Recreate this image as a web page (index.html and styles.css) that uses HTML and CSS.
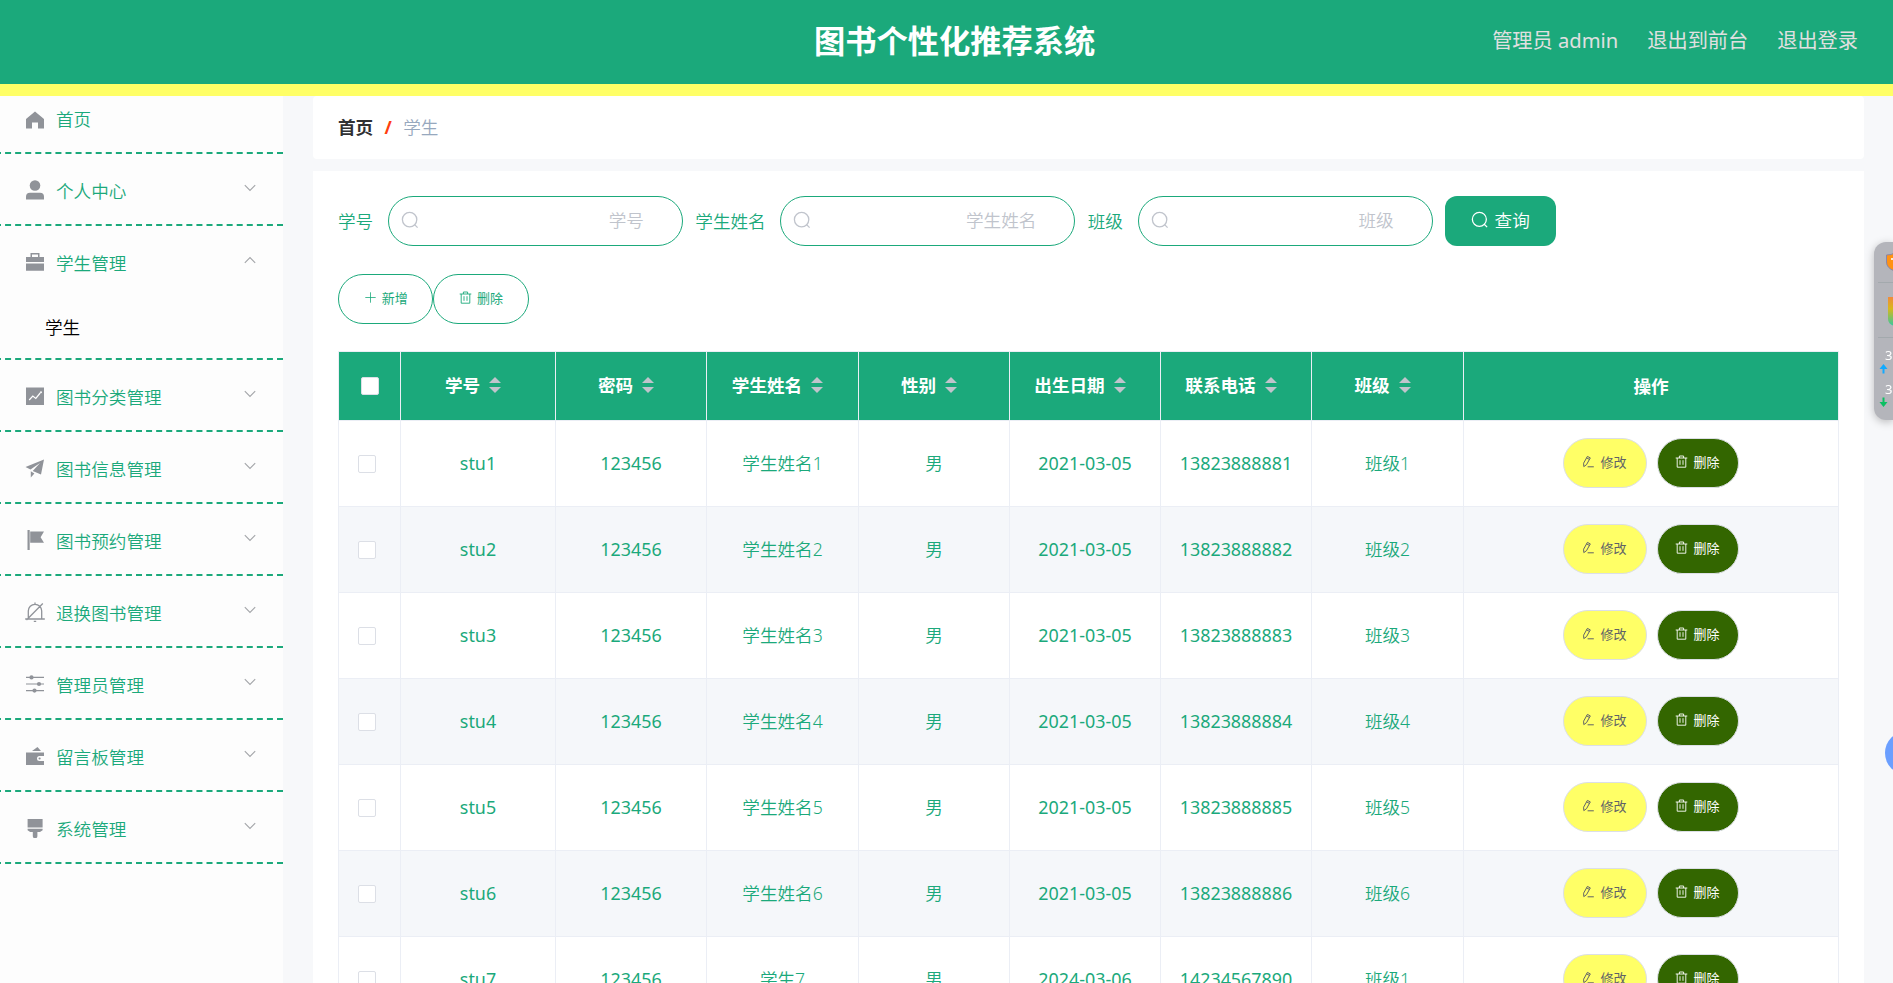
FILE: index.html
```html
<!DOCTYPE html>
<html lang="zh-CN">
<head>
  <meta charset="UTF-8" />
  <meta name="viewport" content="width=device-width, initial-scale=1.0" />
  <title>图书个性化推荐系统</title>
  <link rel="stylesheet" href="styles.css">
</head>
<body>
  <svg class="sprite">
    <symbol id="i-search" viewBox="0 0 18 18"><circle cx="8.6" cy="8.6" r="7.2" fill="none" stroke="currentColor" stroke-width="1.3"/><path d="M13.6 13.6l3 3" stroke="currentColor" stroke-width="1.3"/></symbol>
    <symbol id="i-plus" viewBox="0 0 13 13"><path d="M6.5 1.3v10.4M1.3 6.5h10.4" stroke="currentColor" stroke-width=".8"/></symbol>
    <symbol id="i-trash" viewBox="0 0 13 13"><path d="M.7 3h11.6M2.2 3v9.2h8.6V3M4.4 3V1h4.2v2M5 5.2v4.6M8 5.2v4.6" fill="none" stroke="currentColor" stroke-width=".9"/></symbol>
    <symbol id="i-edit" viewBox="0 0 13 13"><path d="M1.6 8.2L5.4 1.4l2.9 1.5-3.8 6.8-2.7 1.9zM4.6 2.9l2.8 1.5M5.6 11.8h6.2" fill="none" stroke="currentColor"/></symbol>
    <symbol id="i-down" viewBox="0 0 12 8"><path d="M.8 1.2L6 6.4l5.2-5.2" fill="none" stroke="currentColor" stroke-width="1.1"/></symbol>
  </svg>

  <header class="header">
    <h1 class="title">图书个性化推荐系统</h1>
    <div class="user-links">
      <a>管理员 admin</a>
      <a>退出到前台</a>
      <a>退出登录</a>
    </div>
  </header>

  <div class="layout">
    <nav class="sidebar">
      <div class="menu-item home">
        <svg class="menu-icon" viewBox="0 0 20 20"><path d="M10 1.5L1 9v9.5h6v-6h6v6h6V9z"/></svg>
        <span>首页</span>
      </div>
      <div class="menu-item">
        <svg class="menu-icon" viewBox="0 0 20 20"><circle cx="10" cy="5.5" r="5.3"/><path d="M1 19.5v-2.7a4 4 0 0 1 4-4h10a4 4 0 0 1 4 4v2.7z"/></svg>
        <span>个人中心</span>
        <svg class="arrow"><use href="#i-down"/></svg>
      </div>
      <div class="menu-item opened">
        <svg class="menu-icon" viewBox="0 0 20 20"><path d="M1 5h4.5V1h9v4H19v5H1zM7 2.4V5h6V2.4zM1 11.4h18v7.4H1z" fill-rule="evenodd"/></svg>
        <span>学生管理</span>
        <svg class="arrow up"><use href="#i-down"/></svg>
      </div>
      <div class="submenu-item">学生</div>
      <div class="menu-item">
        <svg class="menu-icon" viewBox="0 0 20 20"><path d="M1 1.5h18V19H1z"/><path d="M4.2 14l3.6-4 3 2.4 4.4-5.4" fill="none" stroke="#fff" stroke-width="1.2"/><circle cx="16" cy="6.2" r="1" fill="#fff"/></svg>
        <span>图书分类管理</span>
        <svg class="arrow"><use href="#i-down"/></svg>
      </div>
      <div class="menu-item">
        <svg class="menu-icon" viewBox="0 0 20 20"><path d="M19 1.5L.5 9l5 2.6L15 5l-7.3 8 8.3 3.6zM5.8 13.2v6.2l3.6-4z"/></svg>
        <span>图书信息管理</span>
        <svg class="arrow"><use href="#i-down"/></svg>
      </div>
      <div class="menu-item">
        <svg class="menu-icon" viewBox="0 0 20 20"><path d="M2.5 0h2.2v20.5H2.5zM5.2 1.5H19l-3.4 5.7 3.4 5.6H5.2z"/></svg>
        <span>图书预约管理</span>
        <svg class="arrow"><use href="#i-down"/></svg>
      </div>
      <div class="menu-item">
        <svg class="menu-icon" viewBox="0 0 20 20"><path d="M.2 17h19.6M3.3 17V9a6.7 6.7 0 0 1 13.4 0v8M1.5 18L17.8 1.5M10 .4v2M8.8 19.5h2.4" fill="none" stroke="#909399" stroke-width="1.3"/></svg>
        <span>退换图书管理</span>
        <svg class="arrow"><use href="#i-down"/></svg>
      </div>
      <div class="menu-item">
        <svg class="menu-icon" viewBox="0 0 20 20"><path d="M1 3.4h18M1 10h18M1 16.6h18" stroke="#909399" stroke-width="1.2"/><circle cx="6.5" cy="3.4" r="2.1"/><circle cx="14" cy="10" r="2.1"/><circle cx="9.5" cy="16.6" r="2.1"/></svg>
        <span>管理员管理</span>
        <svg class="arrow"><use href="#i-down"/></svg>
      </div>
      <div class="menu-item">
        <svg class="menu-icon" viewBox="0 0 20 20"><path d="M1 6.4h18V10h-4.5a2.4 2.4 0 0 0 0 5H19v4H1zM7 5l5.5-4L16 5z"/><circle cx="14.6" cy="12.5" r="1.1"/></svg>
        <span>留言板管理</span>
        <svg class="arrow"><use href="#i-down"/></svg>
      </div>
      <div class="menu-item">
        <svg class="menu-icon" viewBox="0 0 20 20"><path d="M2.6 1h15v8.6h-15zM2.6 10.8h15v1.4L15 14h-2.6v4a2.3 2.3 0 0 1-4.6 0v-4H5.2l-2.6-1.8z"/></svg>
        <span>系统管理</span>
        <svg class="arrow"><use href="#i-down"/></svg>
      </div>
    </nav>

    <main class="main">
      <div class="breadcrumb">
        <b>首页</b>
        <i>/</i>
        <span>学生</span>
      </div>

      <section class="content">
        <div class="search-form">
          <label>学号</label>
          <div class="search-box"><svg><use href="#i-search"/></svg><input type="text" placeholder="学号" /></div>
          <label>学生姓名</label>
          <div class="search-box"><svg><use href="#i-search"/></svg><input type="text" placeholder="学生姓名" /></div>
          <label>班级</label>
          <div class="search-box"><svg><use href="#i-search"/></svg><input type="text" placeholder="班级" /></div>
          <button class="btn-query"><svg><use href="#i-search"/></svg>查询</button>
        </div>

        <div class="toolbar">
          <button class="btn"><svg><use href="#i-plus"/></svg>新增</button>
          <button class="btn"><svg><use href="#i-trash"/></svg>删除</button>
        </div>

        <div class="table" id="table">
          <div class="tr th">
            <div class="td"><span class="checkbox"></span></div>
            <div class="td sortable">学号<span class="caret"></span></div>
            <div class="td sortable">密码<span class="caret"></span></div>
            <div class="td sortable">学生姓名<span class="caret"></span></div>
            <div class="td sortable">性别<span class="caret"></span></div>
            <div class="td sortable">出生日期<span class="caret"></span></div>
            <div class="td sortable">联系电话<span class="caret"></span></div>
            <div class="td sortable">班级<span class="caret"></span></div>
            <div class="td">操作</div>
          </div>
        </div>
      </section>
    </main>
  </div>

  <!-- floating widgets on the right edge -->
  <div class="dock">
    <svg viewBox="0 0 20 180">
      <path d="M12.5 13q5 0 8-2v18q-8-3-8-9z" fill="#ff9214" stroke="#8a86a8"/>
      <path d="M17 17h3" stroke="#fff" stroke-width="1.6"/>
      <path d="M4 40.5h16M4 95.5h16" stroke="#a3a9ad"/>
      <defs><linearGradient id="g" x1="0" y1="0" x2="0" y2="1"><stop offset="0" stop-color="#f08a3c"/><stop offset=".4" stop-color="#d8b81c"/><stop offset="1" stop-color="#35c8a0"/></linearGradient></defs>
      <path d="M14 55h6v29q-6-2-6-7z" fill="url(#g)"/>
      <path d="M9.5 122l4 5h-3v4.5h-2v-4.5h-3z" fill="#12aaff"/>
      <path d="M9.5 165l4-5h-3v-4.5h-2v4.5h-3z" fill="#0bbf62"/>
      <text x="11" y="118">3</text>
      <text x="11" y="152">3</text>
    </svg>
  </div>
  <div class="ball"></div>

  <script>
    const students = [
      ["stu1", "123456", "学生姓名1", "男", "2021-03-05", "13823888881", "班级1"],
      ["stu2", "123456", "学生姓名2", "男", "2021-03-05", "13823888882", "班级2"],
      ["stu3", "123456", "学生姓名3", "男", "2021-03-05", "13823888883", "班级3"],
      ["stu4", "123456", "学生姓名4", "男", "2021-03-05", "13823888884", "班级4"],
      ["stu5", "123456", "学生姓名5", "男", "2021-03-05", "13823888885", "班级5"],
      ["stu6", "123456", "学生姓名6", "男", "2021-03-05", "13823888886", "班级6"],
      ["stu7", "123456", "学生7", "男", "2024-03-06", "14234567890", "班级1"]
    ];

    const table = document.getElementById("table");
    students.forEach(s => {
      table.innerHTML += `
        <div class="tr">
          <div class="td check"><span class="checkbox"></span></div>
          ${s.map(v => `<div class="td${/^[\w-]+$/.test(v) ? " latin" : ""}">${v}</div>`).join("")}
          <div class="td actions">
            <button class="btn-edit"><svg><use href="#i-edit"/></svg>修改</button>
            <button class="btn-del"><svg><use href="#i-trash"/></svg>删除</button>
          </div>
        </div>`;
    });
  </script>
</body>
</html>
```
FILE: styles.css
```css
* {
  box-sizing: border-box;
}

body {
  margin: 0;
  height: 100vh;
  overflow: hidden;
  font-family: "Noto Sans", "Noto Sans CJK SC", sans-serif;
  font-size: 17.6px;
  line-height: 24px;
  font-weight: 350;
  color: #1ba97b;
  background: #f7f8fa;
}

.sprite {
  display: none;
}

button, input {
  font-family: inherit;
  font-weight: inherit;
  margin: 0;
}

/* header */
.header {
  display: grid;
  grid-template-columns: 1fr auto 1fr;
  align-items: center;
  height: 96px;
  padding: 0 35px 0 51px;
  background: #1ba97b;
  border-bottom: 12px solid #ffff66;
}

.title {
  grid-column: 2;
  margin: 0;
  padding-bottom: 2px;
  font-size: 31.25px;
  line-height: 40px;
  font-weight: 700;
  color: #fff;
}

.user-links {
  display: flex;
  justify-content: flex-end;
  gap: 29px;
  padding-bottom: 4px;
  font-size: 20.2px;
  font-weight: 400;
  color: #e0e0e0;
}

.layout {
  display: flex;
  height: calc(100vh - 96px);
}

/* sidebar */
.sidebar {
  width: 283px;
  flex: none;
  background: #fdfdfd;
}

.menu-item {
  display: flex;
  align-items: center;
  height: 72px;
  margin-left: -5px;
  padding: 4px 27px 0 30px;
  border-bottom: 2px dashed #1ba97b;
}

.menu-item.home {
  height: 58px;
  padding: 0 27px 11px 30px;
}

.menu-item.opened {
  border-bottom: none;
  height: 70px;
}

.menu-icon {
  width: 20px;
  height: 20px;
  margin-right: 11px;
  margin-bottom: 2px;
  fill: #909399;
}

.menu-item.home .menu-icon {
  margin: 3px 11px 0 0;
}

.arrow {
  width: 12px;
  height: 8px;
  margin-left: auto;
  margin-bottom: 7px;
  color: #a3a5a9;
}

.arrow.up {
  transform: rotate(180deg);
}

.submenu-item {
  height: 64px;
  margin-left: -5px;
  padding: 19px 0 0 50px;
  color: #000;
  border-bottom: 2px dashed #1ba97b;
}

/* main */
.main {
  flex: 1;
  padding: 0 29px 0 30px;
}

.breadcrumb {
  display: flex;
  align-items: center;
  height: 63px;
  padding: 0 25px 2px;
  background: #fff;
  border-radius: 4px;
}

.breadcrumb b {
  font-weight: 700;
  color: #303133;
}

.breadcrumb i {
  width: 30px;
  text-align: center;
  font-style: normal;
  font-weight: 700;
  color: #ff3f0f;
}

.breadcrumb span {
  color: #97a8be;
}

.content {
  height: 812px;
  margin-top: 12px;
  padding: 25px;
  background: #fff;
}

.search-form {
  display: flex;
  align-items: center;
}

.search-form label {
  margin-right: 14.7px;
}

.search-box {
  display: flex;
  align-items: center;
  width: 295px;
  height: 50px;
  margin-right: 12.4px;
  padding: 0 38px 2px 12px;
  border: 1px solid #1ba97b;
  border-radius: 25px;
}

.search-box svg {
  width: 18px;
  height: 18px;
  flex: none;
  color: #c0c4cc;
}

.search-box input {
  flex: 1;
  min-width: 0;
  border: none;
  outline: none;
  padding: 0;
  font-size: 17.6px;
  text-align: right;
  background: none;
}

.search-box input::placeholder {
  color: #c0c4cc;
}

.btn-query {
  display: flex;
  align-items: center;
  gap: 6px;
  width: 111px;
  height: 50px;
  padding: 0 0 3px 26px;
  border: none;
  border-radius: 12px;
  font-size: 17.6px;
  color: #fff;
  background: #1ba97b;
}

.btn-query svg {
  width: 17.5px;
  height: 17.5px;
}

.toolbar {
  display: flex;
  margin: 28px 0 27px;
}

.btn, .btn-edit, .btn-del {
  display: flex;
  align-items: center;
  height: 50px;
  padding: 0 0 3px;
  justify-content: center;
  gap: 5px;
  border: 1px solid #1ba97b;
  border-radius: 25px;
  font-size: 13px;
  font-weight: 400;
  color: #1ba97b;
  background: #fff;
}

.btn {
  width: 95.3px;
}

.btn svg, .btn-edit svg, .btn-del svg {
  width: 13px;
  height: 13px;
}

/* table */
.table {
  width: 1501px;
  border: 1px solid #ebeef5;
  border-right: none;
  border-bottom: none;
}

.tr {
  display: grid;
  grid-template-columns: 62px 155px 151px 152px 151px 151px 151px 152px 375px;
  height: 86px;
  background: #fff;
}

.tr:nth-child(odd) {
  background: #f5f7fa;
}

.td {
  display: flex;
  align-items: center;
  justify-content: center;
  padding-bottom: 2px;
  border-right: 1px solid #ebeef5;
  border-bottom: 1px solid #ebeef5;
}

.td.latin {
  font-size: 17.9px;
  font-weight: 400;
}

.td.check {
  padding: 0 5px 0 0;
}

.tr.th {
  height: 69px;
  font-weight: 700;
  color: #fff;
  background: #1ba97b;
}

.th .td {
  padding: 0;
}

.th .sortable {
  padding: 0 1px 3px 0;
}

.checkbox {
  width: 18px;
  height: 18px;
  border: 1px solid #dcdfe6;
  border-radius: 2px;
  background: #fff;
}

.caret {
  display: flex;
  flex-direction: column;
  align-items: center;
  gap: 4px;
  width: 30px;
}

.caret::before, .caret::after {
  content: "";
  border: 6px solid transparent;
  border-top-width: 0;
  border-bottom: 6px solid #c0c4cc;
}

.caret::after {
  border-bottom-width: 0;
  border-top: 6px solid #c0c4cc;
}

.actions {
  gap: 10px;
  padding-right: 1px;
}

.btn-edit {
  width: 84px;
  color: #606266;
  border-color: #dcdfe6;
  background: #ffff66;
}

.btn-del {
  width: 82px;
  color: #fff;
  border-color: #dcdfe6;
  background: #336600;
}

/* floating widgets */
.dock {
  position: fixed;
  right: 0;
  top: 242px;
  width: 19px;
  height: 178px;
  background: #b4b5bb;
  border-radius: 12px 0 0 12px;
  box-shadow: 0 2px 8px rgba(0, 0, 0, .25);
}

.dock svg {
  display: block;
  width: 20px;
  height: 180px;
  overflow: hidden;
}

.dock text {
  font-size: 13px;
  font-weight: 400;
  fill: #fff;
}

.ball {
  position: fixed;
  right: -36px;
  top: 731px;
  width: 44px;
  height: 44px;
  border-radius: 50%;
  background: #6b9fff;
}
```
